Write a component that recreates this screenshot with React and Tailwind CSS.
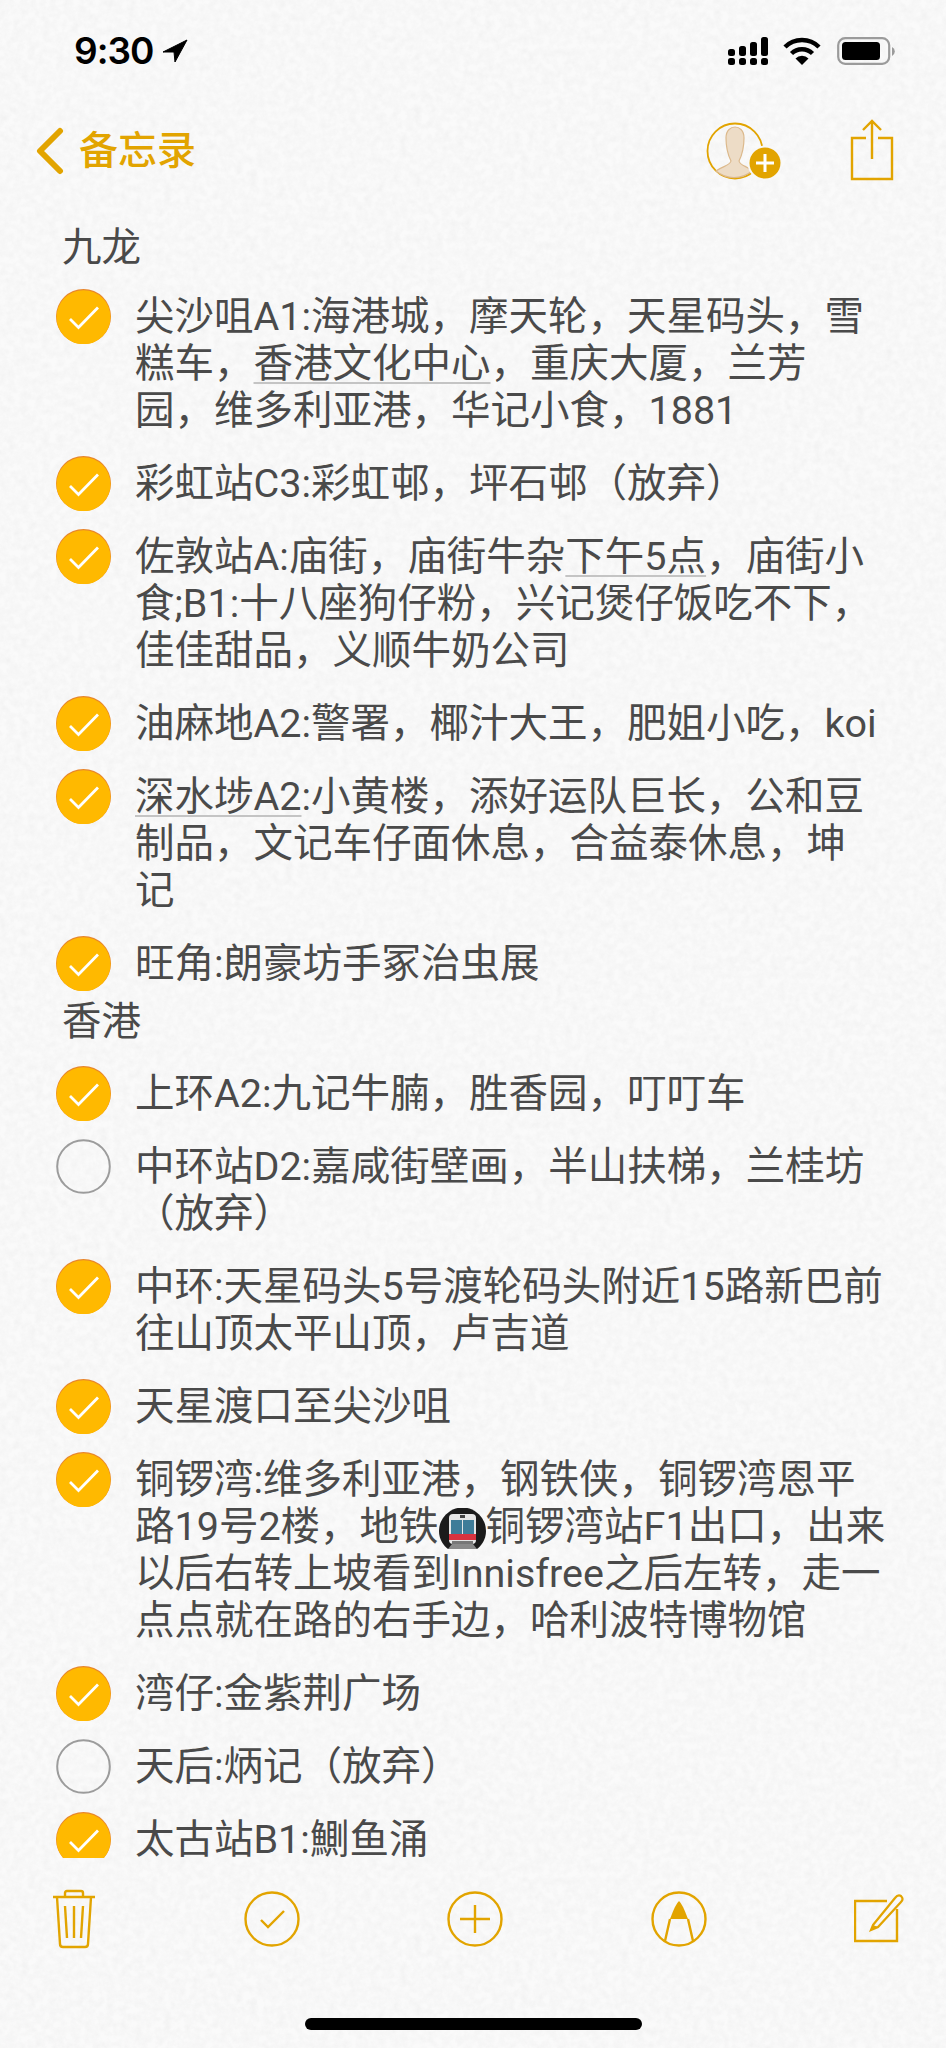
import React from 'react';

const AMBER = '#e2a400';

// paper texture of the Notes app
const Paper = () => (
  <svg className="absolute inset-0 w-full h-full" aria-hidden="true">
    <filter id="paper">
      <feTurbulence type="fractalNoise" baseFrequency="0.14" numOctaves="3" seed="4" />
      <feColorMatrix values="0 0 0 0 0.5  0 0 0 0 0.5  0 0 0 0 0.5  0.8 0.8 0 0 -0.55" />
    </filter>
    <rect width="100%" height="100%" filter="url(#paper)" opacity="0.16" />
  </svg>
);

const CheckCircle = ({ done }) =>
  done ? (
    <svg width="55" height="55" viewBox="0 0 55 55" className="shrink-0">
      <circle cx="27.5" cy="27.5" r="27.5" fill="#e8862c" />
      <circle cx="27.5" cy="28.2" r="27" fill="#ffb900" />
      <path d="M14 30 L22.5 38.5 L42 18.5" fill="none" stroke="#fff" strokeWidth="2.8" />
    </svg>
  ) : (
    <svg width="55" height="55" viewBox="0 0 55 55" className="shrink-0">
      <circle cx="27.5" cy="27.5" r="26.3" fill="none" stroke="#9c9c9c" strokeWidth="2" />
    </svg>
  );

const Train = () => (
  <svg width="47" height="41" viewBox="0 0 47 41" className="inline-block align-[-9px]">
    <path d="M0 23 A23.5 23.5 0 0 1 47 23 C47 32 42 38 38 41 L9 41 C5 38 0 32 0 23 Z" fill="#1b1b1b" />
    <rect x="10" y="6" width="27" height="30" rx="4" fill="#e6e6e6" />
    <rect x="12" y="12" width="11" height="15" fill="#3f7c98" />
    <rect x="24" y="12" width="11" height="15" fill="#3f7c98" />
    <rect x="10" y="26" width="27" height="6" fill="#d8333f" />
    <rect x="21" y="7" width="5" height="3" fill="#444" />
    <rect x="13" y="33" width="21" height="3" fill="#777" />
    <path d="M9 41 L13 36 L34 36 L38 41 Z" fill="#8a8a8a" />
  </svg>
);

const Mark = ({ children }) => (
  <span className="underline decoration-[#c4c4c4] decoration-2 underline-offset-[5px]">{children}</span>
);

const Row = ({ done = true, children }) => (
  <div className="flex items-start gap-[24px] pl-[56px] mb-[26px]">
    <div className="h-[47px] -mt-[2px] shrink-0">
      <CheckCircle done={done} />
    </div>
    <div className="whitespace-nowrap pt-[2px] -mb-[2px]">{children}</div>
  </div>
);

const Heading = ({ children, className }) => (
  <div className={`pl-[62px] ${className}`}>{children}</div>
);

const icon = { fill: 'none', stroke: AMBER, strokeWidth: 2.4 };

export default function App() {
  return (
    <div className="relative w-[946px] h-[2048px] overflow-hidden bg-[#fafafa] flex flex-col font-['Roboto','Noto_Sans_CJK_SC',sans-serif]">
      <Paper />

      {/* status bar */}
      <div className="relative h-[102px] shrink-0 flex items-start justify-between pl-[74px] pr-[49px] pt-[28px]">
        <div className="flex items-center gap-[9px] text-black">
          <span className="font-['Inter'] font-semibold text-[37px] leading-[46px] tracking-[-1px]">9:30</span>
          <svg width="26" height="24" viewBox="0 0 26 24">
            <path d="M25 1 L1 13 L12 13 L13 23 Z" fill="#000" stroke="#000" strokeLinejoin="round" />
          </svg>
        </div>
        <div className="flex items-start gap-[15px] pt-[9px]">
          <svg width="40" height="29" viewBox="0 0 40 29" fill="#000">
            <rect x="0" y="12" width="7" height="7" rx="2.5" />
            <rect x="0" y="21" width="7" height="7" rx="2.5" />
            <rect x="11" y="9" width="7" height="10" rx="2.5" />
            <rect x="11" y="21" width="7" height="7" rx="2.5" />
            <rect x="22" y="5" width="7" height="14" rx="2.5" />
            <rect x="22" y="21" width="7" height="7" rx="2.5" />
            <rect x="33" y="0" width="7" height="19" rx="2.5" />
            <rect x="33" y="21" width="7" height="7" rx="2.5" />
          </svg>
          <svg width="38" height="29" viewBox="0 0 38 29" fill="none" stroke="#000" strokeWidth="4.5">
            <path d="M2 10 A24 24 0 0 1 36 10" />
            <path d="M8.5 16.5 A15 15 0 0 1 29.5 16.5" />
            <path d="M19 28 L12.5 21.5 A9 9 0 0 1 25.5 21.5 Z" fill="#000" stroke="none" />
          </svg>
          <svg width="60" height="29" viewBox="0 0 60 29" className="ml-[1px]">
            <rect x="1.2" y="1.2" width="51" height="25.6" rx="7" fill="none" stroke="#9b9b9b" strokeWidth="2.2" />
            <rect x="5" y="5" width="38" height="18" rx="3.5" fill="#000" />
            <path d="M55 10 A5 5 0 0 1 55 19 Z" fill="#9b9b9b" />
          </svg>
        </div>
      </div>

      {/* nav bar */}
      <div className="relative h-[98px] shrink-0 flex items-center justify-between pl-[36px] pr-[52px]">
        <div className="flex items-center gap-[15px] font-medium text-[39px] leading-[48px] text-[#e2a400]">
          <svg width="28" height="48" viewBox="0 0 28 48" fill="none" stroke="#e2a400" strokeWidth="6" strokeLinecap="round" strokeLinejoin="round">
            <path d="M24 4 L4 24 L24 44" />
          </svg>
          <span>备忘录</span>
        </div>
        <div className="flex items-start gap-[68px]">
          <svg width="76" height="58" viewBox="0 0 76 58">
            <circle cx="29" cy="29" r="27.5" {...icon} strokeWidth="1.8" />
            <path d="M10 49 C16 44 24 44 25 39 C22 33 20 26 20 16 C20 8 25 5 29 5 C33 5 38 8 38 16 C38 26 36 33 33 39 C34 44 42 44 46 49 A28 28 0 0 1 10 49 Z" fill="#eddcc6" stroke="#dcb98c" strokeWidth="1.2" />
            <circle cx="59" cy="41" r="17.5" fill="#f8f8f8" />
            <circle cx="59" cy="41" r="15.5" fill="#e2a400" />
            <path d="M59 32 V50 M50 41 H68" stroke="#fff" strokeWidth="3" />
          </svg>
          <svg width="44" height="62" viewBox="0 0 44 62" className="-mt-[3px]" {...icon}>
            <path d="M16 19 H2 V60 H42 V19 H28" />
            <path d="M22 2 V40 M13 11 L22 2 L31 11" />
          </svg>
        </div>
      </div>

      {/* note body */}
      <div className="relative h-[1658px] shrink-0 overflow-hidden text-[39.5px] leading-[47px] text-[#4a4a4a]">
        <Heading className="pt-[24px] mb-[20px]">九龙</Heading>
        <Row>
          尖沙咀A1:海港城，摩天轮，天星码头，雪<br />
          糕车，<Mark>香港文化中心</Mark>，重庆大厦，兰芳<br />
          园，维多利亚港，华记小食，1881
        </Row>
        <Row>彩虹站C3:彩虹邨，坪石邨（放弃）</Row>
        <Row>
          佐敦站A:庙街，庙街牛杂<Mark>下午5点</Mark>，庙街小<br />
          食;B1:十八座狗仔粉，兴记煲仔饭吃不下，<br />
          佳佳甜品，义顺牛奶公司
        </Row>
        <Row>油麻地A2:警署，椰汁大王，肥姐小吃，koi</Row>
        <Row>
          <Mark>深水埗A2</Mark>:小黄楼，添好运队巨长，公和豆<br />
          制品，文记车仔面休息，合益泰休息，坤<br />
          记
        </Row>
        <Row>旺角:朗豪坊手冢治虫展</Row>
        <Heading className="-mt-[13px] mb-[23px]">香港</Heading>
        <Row>上环A2:九记牛腩，胜香园，叮叮车</Row>
        <Row done={false}>
          中环站D2:嘉咸街壁画，半山扶梯，兰桂坊<br />
          （放弃）
        </Row>
        <Row>
          中环:天星码头5号渡轮码头附近15路新巴前<br />
          往山顶太平山顶，卢吉道
        </Row>
        <Row>天星渡口至尖沙咀</Row>
        <Row>
          铜锣湾:维多利亚港，钢铁侠，铜锣湾恩平<br />
          路19号2楼，地铁<Train />铜锣湾站F1出口，出来<br />
          以后右转上坡看到Innisfree之后左转，走一<br />
          点点就在路的右手边，哈利波特博物馆
        </Row>
        <Row>湾仔:金紫荆广场</Row>
        <Row done={false}>天后:炳记（放弃）</Row>
        <Row>太古站B1:鰂鱼涌</Row>
      </div>

      {/* toolbar */}
      <div className="relative h-[160px] shrink-0 flex items-start justify-between pl-[52px] pr-[42px] pt-[31px]">
        <svg width="44" height="60" viewBox="0 0 44 60" {...icon}>
          <path d="M1 8 H43 M13 8 V4 Q13 2 15 2 H29 Q31 2 31 4 V8" />
          <path d="M5 8 L8 55 Q8 58 11 58 H33 Q36 58 36 55 L39 8" />
          <path d="M13 17 L15 49 M22 17 V49 M31 17 L29 49" />
        </svg>
        <svg width="56" height="56" viewBox="0 0 56 56" className="mt-[2px]" {...icon}>
          <circle cx="28" cy="28" r="26.5" />
          <path d="M17 29 L24 36 L40 20" />
        </svg>
        <svg width="56" height="56" viewBox="0 0 56 56" className="mt-[2px]" {...icon}>
          <circle cx="28" cy="28" r="26.5" />
          <path d="M28 14 V42 M13 28 H43" />
        </svg>
        <svg width="56" height="56" viewBox="0 0 56 56" className="mt-[2px]" {...icon}>
          <circle cx="28" cy="28" r="26.5" />
          <path d="M28 10 Q25 12 19 28 H37 Q31 12 28 10 Z" fill={AMBER} stroke="none" />
          <path d="M19 28 L14 50 M37 28 L42 50" />
        </svg>
        <svg width="50" height="56" viewBox="0 0 50 56" className="mt-[2px]" {...icon}>
          <path d="M33 10 H1 V50 H43 V18" />
          <path d="M19 34 L41 7 Q44 3 47 5 Q50 8 47 11 L24 36 L17 39 Z" strokeWidth="2.2" />
          <path d="M17 39 L19 34 L24 36 Z" fill={AMBER} stroke="none" />
        </svg>
      </div>

      {/* home indicator */}
      <div className="absolute left-[305px] top-[2018px] w-[337px] h-[12px] rounded-full bg-black" />
    </div>
  );
}
